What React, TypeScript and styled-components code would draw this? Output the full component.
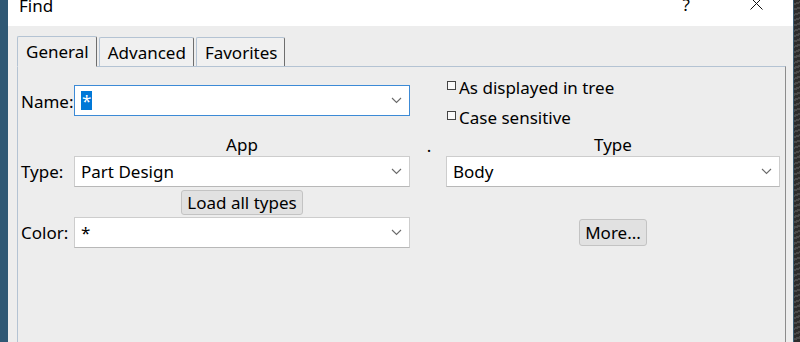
import React from "react";
import styled, { createGlobalStyle } from "styled-components";

const GlobalStyle = createGlobalStyle`
	html, body {
		margin: 0;
		padding: 0;
	}
	body {
		width: 800px;
		height: 342px;
		overflow: hidden;
		background: #2f5874;
		font-family: "Noto Sans", "Open Sans", sans-serif;
		color: #000;
	}
`;

const Chevron = () => (
	<svg width="11" height="7" viewBox="0 0 11 7">
		<path d="M1 1 L5.5 5.5 L10 1" fill="none" stroke="#6a6a6a" strokeWidth="1.1" />
	</svg>
);

const CloseGlyph = () => (
	<svg width="13" height="13" viewBox="0 0 13 13">
		<path d="M0.5 0.5 L12.5 12.5 M12.5 0.5 L0.5 12.5" stroke="#111" strokeWidth="1" />
	</svg>
);

interface IComboProps {
	value: string;
	focused?: boolean;
	selected?: boolean;
}

const Combo = (props: IComboProps) => (
	<ComboBox $focused={props.focused}>
		{props.selected ? <Selection>{props.value}</Selection> : <span>{props.value}</span>}
		<Chevron />
	</ComboBox>
);

const Check = (props: { label: string }) => (
	<CheckRow>
		<CheckSquare />
		<span>{props.label}</span>
	</CheckRow>
);

export default function App() {
	const tabs = ["General", "Advanced", "Favorites"];
	return (
		<>
			<GlobalStyle />
			<Desktop>
				<Window>
					<TitleBar>
						<Title>Find</Title>
						<TitleButtons>
							<HelpGlyph>?</HelpGlyph>
							<CloseGlyph />
						</TitleButtons>
					</TitleBar>
					<Body>
						<TabBar>
							{tabs.map((t, i) => (
								<Tab key={t} $active={i === 0}>
									{t}
								</Tab>
							))}
						</TabBar>
						<Pane>
							<FormGrid>
								<Label $row={1}>Name:</Label>
								<NameCell>
									<Combo value="*" focused selected />
								</NameCell>
								<CheckColumn>
									<Check label="As displayed in tree" />
									<Check label="Case sensitive" />
								</CheckColumn>

								<Header $col={2}>App</Header>
								<Dot>.</Dot>
								<Header $col={4}>Type</Header>

								<Label $row={3}>Type:</Label>
								<Cell $col={2} $row={3}>
									<Combo value="Part Design" />
								</Cell>
								<Cell $col={4} $row={3}>
									<Combo value="Body" />
								</Cell>

								<ButtonCell $col={2} $row={4}>
									<PushButton>Load all types</PushButton>
								</ButtonCell>

								<Label $row={5}>Color:</Label>
								<Cell $col={2} $row={5}>
									<Combo value="*" />
								</Cell>
								<ButtonCell $col={4} $row={5}>
									<PushButton $tall>More...</PushButton>
								</ButtonCell>
							</FormGrid>
						</Pane>
					</Body>
				</Window>
				<DesktopEdge />
			</Desktop>
		</>
	);
}

const Desktop = styled.div`
	display: flex;
	height: 342px;
	padding-left: 8px;
	box-sizing: border-box;
`;

const Window = styled.div`
	width: 785px;
	display: flex;
	flex-direction: column;
	background: #ededed;
`;

const DesktopEdge = styled.div`
	flex: 1;
	background: repeating-linear-gradient(
		160deg,
		#2c2c2c 0px,
		#2c2c2c 3px,
		#4a4a4a 3px,
		#4a4a4a 5px
	);
	border-left: 1px solid #3b5f78;
`;

const TitleBar = styled.div`
	height: 26px;
	flex-shrink: 0;
	background: #fff;
	display: flex;
	align-items: flex-start;
	padding-left: 11px;
	padding-right: 30px;
	overflow: hidden;
`;

const Title = styled.div`
	font-size: 17px;
	line-height: 17px;
	margin-top: -3px;
`;

const TitleButtons = styled.div`
	margin-left: auto;
	display: flex;
	align-items: flex-start;
	gap: 60px;
	margin-top: -3px;
`;

const HelpGlyph = styled.span`
	font-size: 17px;
	line-height: 17px;
	margin-top: -1px;
`;

const Body = styled.div`
	flex: 1;
	display: flex;
	flex-direction: column;
	padding: 9px 7px 0 9px;
`;

const TabBar = styled.div`
	display: flex;
	align-items: flex-end;
	height: 31px;
	position: relative;
	z-index: 1;
`;

const Tab = styled.div<{ $active?: boolean }>`
	height: ${(p) => (p.$active ? "31px" : "29px")};
	box-sizing: border-box;
	display: flex;
	align-items: center;
	padding: 0 7px 0 8px;
	margin-right: 2px;
	font-size: 17px;
	background: ${(p) => (p.$active ? "#ededed" : "#f0f0f0")};
	border: 1px solid #b4c3d3;
	border-right: 1px solid #6e6e6e;
	border-bottom: ${(p) => (p.$active ? "1px solid #ededed" : "none")};
	margin-bottom: ${(p) => (p.$active ? "-1px" : "0")};
	border-radius: 2px 2px 0 0;
`;

const Pane = styled.div`
	flex: 1;
	border: 1px solid #b4c3d3;
	border-right: 1px solid #8c8c8c;
	border-bottom: none;
	padding: 5px 3px 0 3px;
`;

const FormGrid = styled.div`
	display: grid;
	grid-template-columns: 53px 336px 36px 334px;
	grid-template-rows: 60px 24px 31px 30px 31px;
	font-size: 17px;
`;

const Label = styled.div<{ $row: number }>`
	grid-column: 1;
	grid-row: ${(p) => p.$row};
	align-self: center;
	white-space: nowrap;
	margin-top: ${(p) => (p.$row === 1 ? "-1px" : "0")};
`;

const Cell = styled.div<{ $col: number; $row: number }>`
	grid-column: ${(p) => p.$col};
	grid-row: ${(p) => p.$row};
`;

const NameCell = styled.div`
	grid-column: 2;
	grid-row: 1;
	padding-top: 13px;
`;

const ButtonCell = styled.div<{ $col: number; $row: number }>`
	grid-column: ${(p) => p.$col};
	grid-row: ${(p) => p.$row};
	display: flex;
	justify-content: center;
	align-items: center;
`;

const CheckColumn = styled.div`
	grid-column: 4;
	grid-row: 1;
	display: flex;
	flex-direction: column;
	padding-left: 1px;
`;

const CheckRow = styled.div`
	height: 30px;
	display: flex;
	align-items: center;
	gap: 3px;
	white-space: nowrap;
`;

const CheckSquare = styled.span`
	width: 9px;
	height: 9px;
	box-sizing: border-box;
	border: 1px solid #444;
	background: #fafafa;
	margin-top: -4px;
`;

const Header = styled.div<{ $col: number }>`
	grid-column: ${(p) => p.$col};
	grid-row: 2;
	text-align: center;
	align-self: end;
	line-height: 22px;
`;

const Dot = styled.div`
	grid-column: 3;
	grid-row: 2;
	text-align: center;
	align-self: end;
	line-height: 20px;
	padding-left: 2px;
`;

const ComboBox = styled.div<{ $focused?: boolean }>`
	height: 31px;
	box-sizing: border-box;
	background: #fff;
	border: 1px solid ${(p) => (p.$focused ? "#3c8ad6" : "#cdcdcd")};
	border-bottom-color: ${(p) => (p.$focused ? "#3c8ad6" : "#b8b8b8")};
	display: flex;
	align-items: center;
	justify-content: space-between;
	padding: 0 7px 0 6px;
	white-space: nowrap;
`;

const Selection = styled.span`
	background: #0078d7;
	color: #fff;
	line-height: 19px;
	padding: 0 1px;
`;

const PushButton = styled.button<{ $tall?: boolean }>`
	height: ${(p) => (p.$tall ? "27px" : "25px")};
	font-family: inherit;
	font-size: 17px;
	color: #000;
	background: #e1e1e1;
	border: 1px solid #c3c3c3;
	border-radius: 3px;
	padding: 0 5px;
	line-height: 1;
`;
